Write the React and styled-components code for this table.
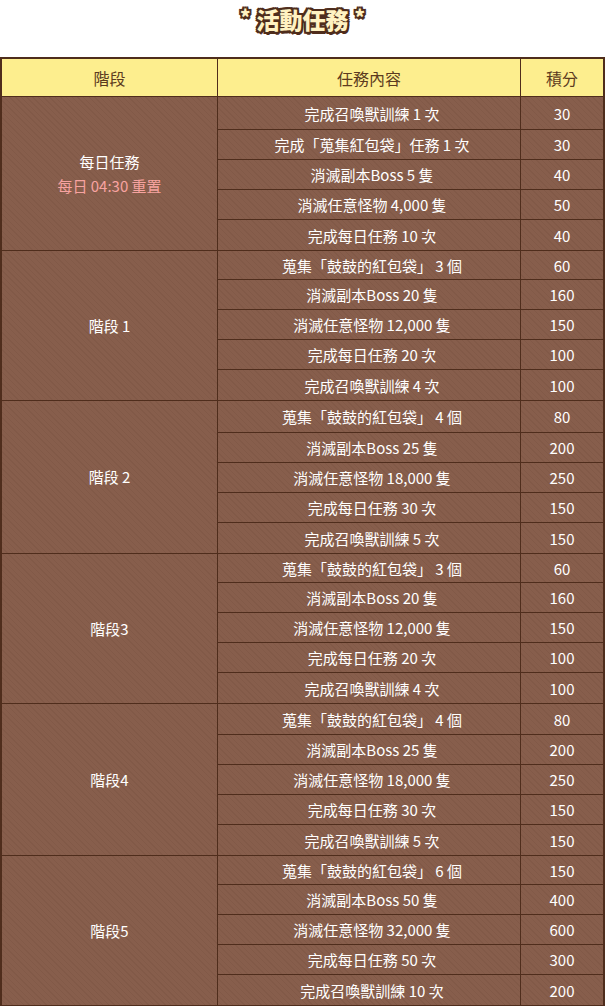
import React from "react";
import styled, { createGlobalStyle } from "styled-components";

const GlobalStyle = createGlobalStyle`
  html, body {
    margin: 0;
    padding: 0;
    background: #fff;
    font-family: "Noto Sans CJK TC", "Noto Sans", sans-serif;
  }
`;

const groups = [
  {
    stage: "每日任務",
    note: "每日 04:30 重置",
    first: 33,
    tasks: [
      ["完成召喚獸訓練 1 次", "30"],
      ["完成「蒐集紅包袋」任務 1 次", "30"],
      ["消滅副本Boss 5 隻", "40"],
      ["消滅任意怪物 4,000 隻", "50"],
      ["完成每日任務 10 次", "40"],
    ],
  },
  {
    stage: "階段 1",
    first: 29,
    tasks: [
      ["蒐集「鼓鼓的紅包袋」 3 個", "60"],
      ["消滅副本Boss 20 隻", "160"],
      ["消滅任意怪物 12,000 隻", "150"],
      ["完成每日任務 20 次", "100"],
      ["完成召喚獸訓練 4 次", "100"],
    ],
  },
  {
    stage: "階段 2",
    first: 32,
    tasks: [
      ["蒐集「鼓鼓的紅包袋」 4 個", "80"],
      ["消滅副本Boss 25 隻", "200"],
      ["消滅任意怪物 18,000 隻", "250"],
      ["完成每日任務 30 次", "150"],
      ["完成召喚獸訓練 5 次", "150"],
    ],
  },
  {
    stage: "階段3",
    first: 29,
    tasks: [
      ["蒐集「鼓鼓的紅包袋」 3 個", "60"],
      ["消滅副本Boss 20 隻", "160"],
      ["消滅任意怪物 12,000 隻", "150"],
      ["完成每日任務 20 次", "100"],
      ["完成召喚獸訓練 4 次", "100"],
    ],
  },
  {
    stage: "階段4",
    first: 31,
    tasks: [
      ["蒐集「鼓鼓的紅包袋」 4 個", "80"],
      ["消滅副本Boss 25 隻", "200"],
      ["消滅任意怪物 18,000 隻", "250"],
      ["完成每日任務 30 次", "150"],
      ["完成召喚獸訓練 5 次", "150"],
    ],
  },
  {
    stage: "階段5",
    first: 29,
    tasks: [
      ["蒐集「鼓鼓的紅包袋」 6 個", "150"],
      ["消滅副本Boss 50 隻", "400"],
      ["消滅任意怪物 32,000 隻", "600"],
      ["完成每日任務 50 次", "300"],
      ["完成召喚獸訓練 10 次", "200"],
    ],
  },
];

const line = "#4f2d1c";

const Page = styled.div`
  width: 605px;
`;

const TitleBar = styled.div`
  height: 57px;
  display: flex;
  justify-content: center;
  padding-top: 1px;
  box-sizing: border-box;
`;

const Title = styled.h1`
  margin: 0;
  font-size: 23px;
  font-weight: 900;
  line-height: 32px;
  color: #fff2c2;
  text-shadow: 2px 0 0 ${line}, -2px 0 0 ${line}, 0 2px 0 ${line}, 0 -2px 0 ${line},
    2px 2px 0 ${line}, -2px -2px 0 ${line}, 2px -2px 0 ${line}, -2px 2px 0 ${line},
    1px 3px 0 ${line};
`;

const Star = styled.span`
  font-size: 20px;
  vertical-align: 4px;
  margin: 0 6px;
`;

const Table = styled.div`
  border: 2px solid ${line};
  border-bottom-width: 1px;
  background-color: #875e4c;
  background-image: repeating-linear-gradient(
    45deg,
    transparent 0 3px,
    rgba(60, 30, 15, 0.07) 3px 4px
  );
`;

const HeaderRow = styled.div`
  display: grid;
  grid-template-columns: 216px 1fr 82px;
  height: 37px;
  background: #fdee8e;
  border-bottom: 1px solid ${line};
`;

const HeadCell = styled.div`
  display: flex;
  align-items: center;
  justify-content: center;
  font-size: 16px;
  color: #5c3b20;
  border-right: ${(p) => (p.$last ? "none" : `1px solid ${line}`)};
`;

const Group = styled.div`
  display: grid;
  grid-template-columns: 216px 1fr;
  border-bottom: ${(p) => (p.$last ? "none" : `1px solid ${line}`)};
`;

const StageCell = styled.div`
  display: flex;
  flex-direction: column;
  align-items: center;
  justify-content: center;
  border-right: 1px solid ${line};
  color: #fff;
  font-size: 15px;
  line-height: 24px;
`;

const Note = styled.span`
  color: #f7a3a0;
`;

const TaskList = styled.div`
  display: flex;
  flex-direction: column;
`;

const TaskRow = styled.div`
  display: grid;
  grid-template-columns: 1fr 82px;
  height: ${(p) => p.$h}px;
  box-sizing: border-box;
  border-bottom: ${(p) => (p.$last ? "none" : `1px solid ${line}`)};
`;

const Cell = styled.div`
  display: flex;
  align-items: center;
  justify-content: center;
  color: #fff;
  font-size: 15px;
  white-space: pre;
  padding-left: ${(p) => (p.$task ? "6px" : "0")};
  border-right: ${(p) => (p.$task ? `1px solid ${line}` : "none")};
`;

export default function App() {
  return (
    <Page>
      <GlobalStyle />
      <TitleBar>
        <Title>
          <Star>*</Star>活動任務<Star>*</Star>
        </Title>
      </TitleBar>
      <Table>
        <HeaderRow>
          <HeadCell>階段</HeadCell>
          <HeadCell>任務內容</HeadCell>
          <HeadCell $last>積分</HeadCell>
        </HeaderRow>
        {groups.map((g, gi) => (
          <Group key={gi} $last={gi === groups.length - 1}>
            <StageCell>
              <span>{g.stage}</span>
              {g.note && <Note>{g.note}</Note>}
            </StageCell>
            <TaskList>
              {g.tasks.map(([task, pts], ti) => (
                <TaskRow
                  key={ti}
                  $h={ti === 0 ? g.first : 30}
                  $last={ti === g.tasks.length - 1}
                >
                  <Cell $task>{task}</Cell>
                  <Cell>{pts}</Cell>
                </TaskRow>
              ))}
            </TaskList>
          </Group>
        ))}
      </Table>
    </Page>
  );
}
